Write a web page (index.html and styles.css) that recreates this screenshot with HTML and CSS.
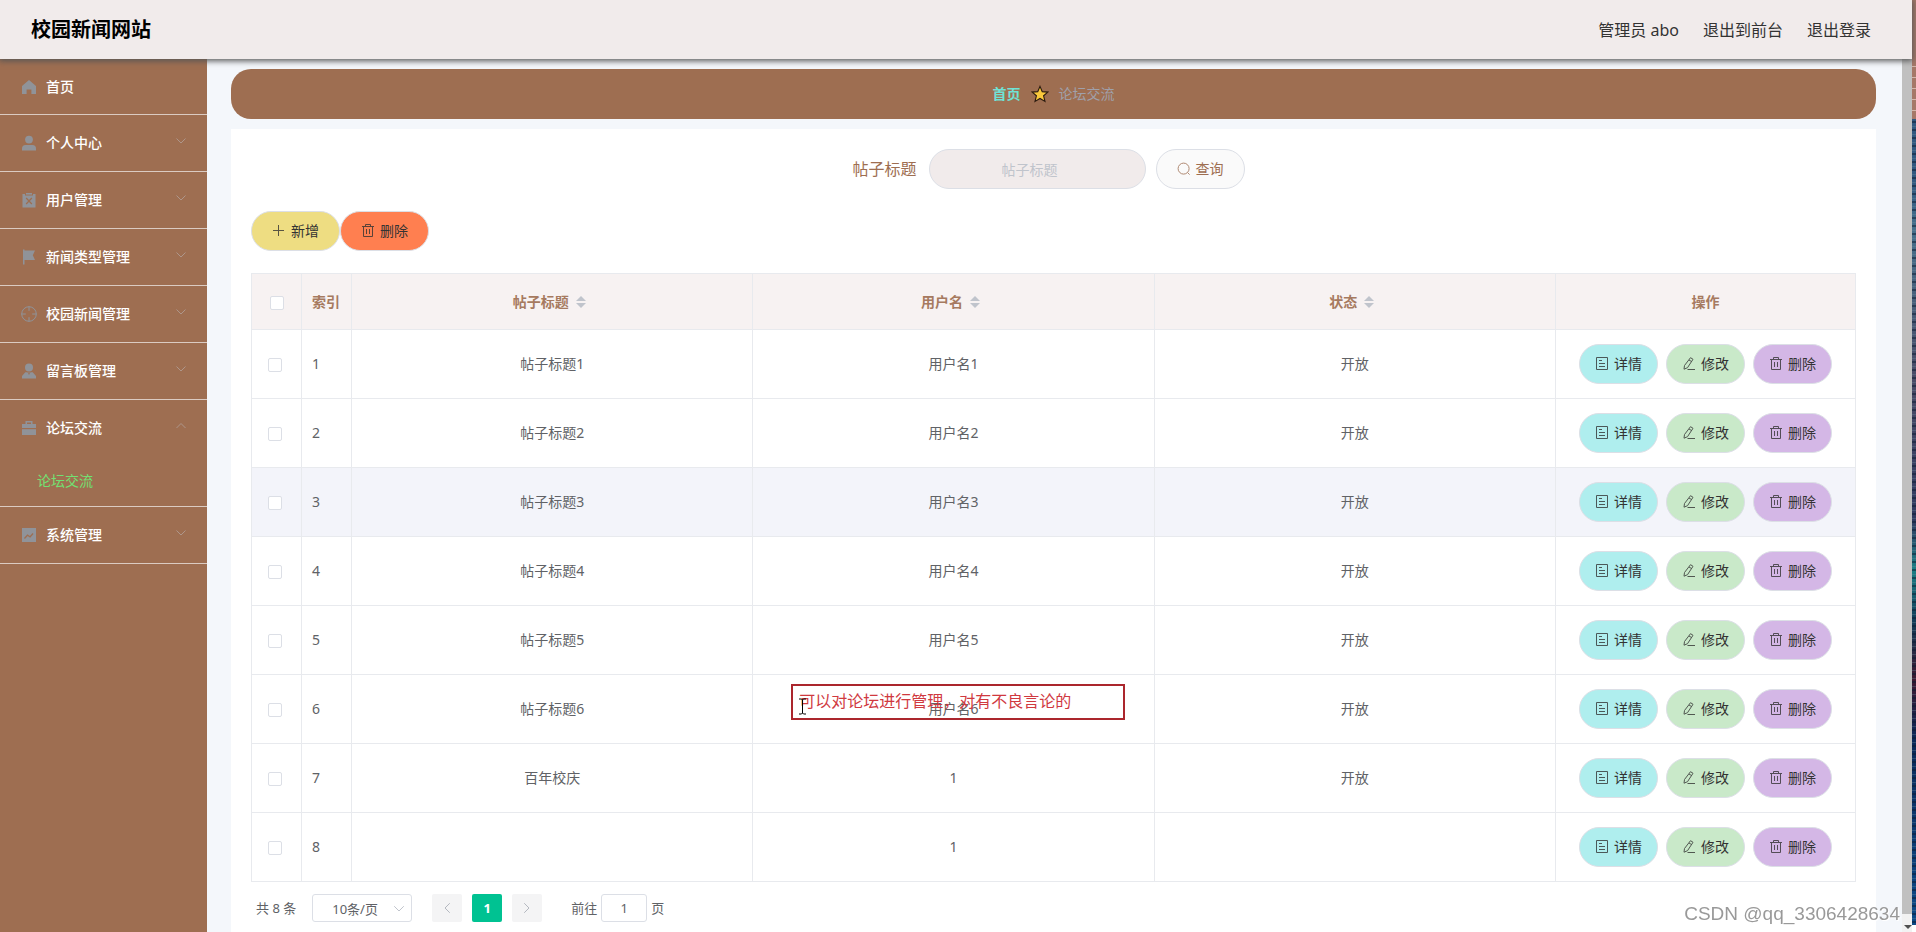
FILE: index.html
```html
<!DOCTYPE html>
<html lang="zh-CN">
<head>
<meta charset="utf-8">
<title>校园新闻网站</title>
<link rel="stylesheet" href="styles.css">
</head>
<body>
<svg class="sprite" aria-hidden="true">
  <symbol id="i-home" viewBox="0 0 16 16"><path d="M8 1 15 7v8h-4.600v-4.600H5.600V15H1V7z"/></symbol>
  <symbol id="i-user" viewBox="0 0 16 16"><circle cx="8" cy="4.600" r="3.900"/><path d="M1 15.500v-2c0-2.200 1.300-3.500 3.500-3.500h7c2.200 0 3.500 1.300 3.500 3.500v2z"/></symbol>
  <symbol id="i-clip" viewBox="0 0 16 16"><path fill-rule="evenodd" d="M1.500 2H4v1.500h8V2h2.500v13.500h-13zM5.600 5.600 4.700 6.500 7.100 9 4.700 11.500l.9.900L8 9.900l2.400 2.500.9-.9L8.900 9l2.400-2.500-.9-.9L8 8.100z"/><path d="M5 1h6v1.600H5z"/></symbol>
  <symbol id="i-flag" viewBox="0 0 16 16"><path d="M2 .5h1.500V15.500H2zM3.500 1.500H14l-2.200 4.700L14 11H3.500z"/></symbol>
  <symbol id="i-aim" viewBox="0 0 16 16"><path class="line" d="M8 .6v4.200M8 11.200v4.200M.6 8h4.200M11.200 8h4.200"/><circle class="line" cx="8" cy="8" r="7.300"/></symbol>
  <symbol id="i-person" viewBox="0 0 16 16"><circle cx="8" cy="4.500" r="4"/><path d="M4.300 9.200h2.200L8 12l1.500-2.800h2.200L15 13v2.500H1V13z"/><path d="m7.300 9.200h1.400L8 11z"/></symbol>
  <symbol id="i-case" viewBox="0 0 16 16"><path fill-rule="evenodd" d="M4.500 1h7v3H15v4H1V4h3.500zM6 2.400V4h4V2.400z"/><path d="M1 9.200h14V15H1z"/></symbol>
  <symbol id="i-chart" viewBox="0 0 16 16"><path fill-rule="evenodd" d="M1 1h14v14H1zM3 11l.9.900 2.800-3 2.500 1.900L12.500 7l-.9-.9-2.700 3-2.500-1.900z"/></symbol>
  <symbol id="i-down" viewBox="0 0 12 12"><path class="line" d="m1.500 3.500 4.500 4.500 4.500-4.500"/></symbol>
  <symbol id="i-up" viewBox="0 0 12 12"><path class="line" d="m1.500 8 4.500-4.500L10.500 8"/></symbol>
  <symbol id="i-left" viewBox="0 0 12 12"><path class="line" d="M8.500 1.500 4 6l4.500 4.500"/></symbol>
  <symbol id="i-right" viewBox="0 0 12 12"><path class="line" d="M3.500 1.500 8 6l-4.500 4.500"/></symbol>
  <symbol id="i-plus" viewBox="0 0 14 14"><path class="line" d="M6.500 1v11M1 6.500h11"/></symbol>
  <symbol id="i-trash" viewBox="0 0 14 14"><path class="line" d="M1 2.500h12M4.500 2.500v-2h5v2M2.500 2.500v10h9v-10M5.500 5v5M8.500 5v5"/></symbol>
  <symbol id="i-doc" viewBox="0 0 14 14"><path class="line" d="M1.500 .5h11v12h-11zM4 3.500h3M4 6.500h6M4 9.500h6"/></symbol>
  <symbol id="i-edit" viewBox="0 0 14 14"><path class="line" d="M8.500 .7 11 2.300 5.500 10.700 2 12.200 2.500 8.500zM7 3 9.800 4.700M5.500 12.500H13"/></symbol>
  <symbol id="i-search" viewBox="0 0 14 14"><circle class="line" cx="6.600" cy="6.600" r="5.500"/><path class="line" d="m10.600 10.600 2 2"/></symbol>
  <symbol id="i-star" viewBox="0 0 16 16"><path d="m8 1.200 2 4.700 5 .4-3.800 3.300L12.400 14.600 8 12l-4.400 2.600 1.200-5L1 6.300l5-.4z"/></symbol>
</svg>

<div class="screen">
  <div class="app">
    <header class="topbar">
      <h1 class="brand">校园新闻网站</h1>
      <nav class="account">
        <span>管理员 abo</span>
        <a href="#">退出到前台</a>
        <a href="#">退出登录</a>
      </nav>
    </header>
    <div class="body">
      <nav class="sidebar">
        <ul class="menu">
          <li class="menu-item"><a class="menu-link" href="#"><svg class="menu-icon"><use href="#i-home"/></svg><span>首页</span></a></li>
          <li class="menu-item"><a class="menu-link" href="#"><svg class="menu-icon"><use href="#i-user"/></svg><span>个人中心</span><svg class="arrow"><use href="#i-down"/></svg></a></li>
          <li class="menu-item"><a class="menu-link" href="#"><svg class="menu-icon"><use href="#i-clip"/></svg><span>用户管理</span><svg class="arrow"><use href="#i-down"/></svg></a></li>
          <li class="menu-item"><a class="menu-link" href="#"><svg class="menu-icon"><use href="#i-flag"/></svg><span>新闻类型管理</span><svg class="arrow"><use href="#i-down"/></svg></a></li>
          <li class="menu-item"><a class="menu-link" href="#"><svg class="menu-icon"><use href="#i-aim"/></svg><span>校园新闻管理</span><svg class="arrow"><use href="#i-down"/></svg></a></li>
          <li class="menu-item"><a class="menu-link" href="#"><svg class="menu-icon"><use href="#i-person"/></svg><span>留言板管理</span><svg class="arrow"><use href="#i-down"/></svg></a></li>
          <li class="menu-item">
            <a class="menu-link" href="#"><svg class="menu-icon"><use href="#i-case"/></svg><span>论坛交流</span><svg class="arrow"><use href="#i-up"/></svg></a>
            <a class="submenu-link" href="#">论坛交流</a>
          </li>
          <li class="menu-item"><a class="menu-link" href="#"><svg class="menu-icon"><use href="#i-chart"/></svg><span>系统管理</span><svg class="arrow"><use href="#i-down"/></svg></a></li>
        </ul>
      </nav>
      <main class="main">
        <nav class="breadcrumb">
          <a class="crumb-home" href="#">首页</a>
          <svg class="star"><use href="#i-star"/></svg>
          <span class="crumb-current">论坛交流</span>
        </nav>
        <section class="card">
          <form class="search">
            <label class="search-label" for="title">帖子标题</label>
            <input class="search-input" id="title" type="text" placeholder="帖子标题">
            <button class="btn btn-search" type="button"><svg class="icon"><use href="#i-search"/></svg>查询</button>
          </form>
          <div class="actions">
            <button class="btn btn-add" type="button"><svg class="icon"><use href="#i-plus"/></svg>新增</button>
            <button class="btn btn-remove" type="button"><svg class="icon"><use href="#i-trash"/></svg>删除</button>
          </div>
          <table class="table">
            <colgroup><col class="col-narrow"><col class="col-narrow"><col><col><col><col class="col-ops"></colgroup>
            <thead>
              <tr>
                <th class="cell-check"><input class="check" type="checkbox" aria-label="全选"></th>
                <th class="cell-index">索引</th>
                <th><span class="sortable">帖子标题<span class="carets"></span></span></th>
                <th><span class="sortable">用户名<span class="carets"></span></span></th>
                <th><span class="sortable">状态<span class="carets"></span></span></th>
                <th>操作</th>
              </tr>
            </thead>
            <tbody id="rows"></tbody>
          </table>
          <div class="pagination">
            <span class="total">共 8 条</span>
            <span class="size">
              <select class="size-select" aria-label="每页条数"><option>10条/页</option></select>
              <svg class="size-arrow"><use href="#i-down"/></svg>
            </span>
            <span class="pager">
              <button class="page-btn" type="button" aria-label="上一页" disabled><svg class="page-icon"><use href="#i-left"/></svg></button>
              <button class="page-btn page-current" type="button">1</button>
              <button class="page-btn" type="button" aria-label="下一页" disabled><svg class="page-icon"><use href="#i-right"/></svg></button>
            </span>
            <label class="jump">前往<input class="jump-input" type="text" value="1">页</label>
          </div>
        </section>
      </main>
      <div class="scrollbar"><div class="thumb"></div><div class="scroll-end"></div></div>
    </div>
  </div>
  <div class="edge"></div>
  <div class="watermark">CSDN @qq_3306428634</div>
</div>
<script src="rows.js"></script>
</body>
</html>
```
FILE: rows.js
```js
const posts = [
  ["帖子标题1", "用户名1", "开放"],
  ["帖子标题2", "用户名2", "开放"],
  ["帖子标题3", "用户名3", "开放"],
  ["帖子标题4", "用户名4", "开放"],
  ["帖子标题5", "用户名5", "开放"],
  ["帖子标题6", "用户名6", "开放"],
  ["百年校庆", "1", "开放"],
  ["", "1", ""]
];
const hovered = 2;
const annotated = 5;

const caption = `<div class="caption">可以对论坛进行管理，对有不良言论的
  <svg class="ibeam" viewBox="0 0 9 17"><path d="M1 1h2.500l1 1 1-1H8M4.500 2v13M1 16h2.500l1-1 1 1H8"/></svg></div>`;

const button = (kind, icon, text) =>
  `<button class="btn btn-row ${kind}" type="button"><svg class="icon"><use href="#${icon}"/></svg>${text}</button>`;

document.getElementById("rows").innerHTML = posts.map(([title, user, state], i) => `
  <tr class="${i === hovered ? "hovered" : ""}">
    <td class="cell-check"><input class="check" type="checkbox" aria-label="选择第${i + 1}行"></td>
    <td class="cell-index">${i + 1}</td>
    <td>${title}</td>
    <td class="cell-user">${user}${i === annotated ? caption : ""}</td>
    <td>${state}</td>
    <td><div class="ops">${button("btn-detail", "i-doc", "详情")}${button("btn-edit", "i-edit", "修改")}${button("btn-delete", "i-trash", "删除")}</div></td>
  </tr>`).join("");
```
FILE: styles.css
```css
* { box-sizing: border-box; }
body {
  margin: 0;
  font: 14px/20px "Noto Sans", "Noto Sans CJK SC", sans-serif;
  color: #606266;
}
a { color: inherit; text-decoration: none; }
button, input, select { font: inherit; color: inherit; }
.sprite { position: absolute; width: 0; height: 0; }
.line { fill: none; stroke: currentColor; stroke-width: 1; }

.screen { display: flex; min-height: 100vh; background: #fff; }
.app { flex: 1; display: flex; flex-direction: column; min-width: 0; }

.topbar {
  position: relative;
  z-index: 1;
  display: flex;
  align-items: center;
  justify-content: space-between;
  height: 59px;
  padding: 0 41px 0 31px;
  background: #f1ebeb;
  box-shadow: 0 1px 6px 1px #555;
}
.brand { margin: 0; font-size: 20px; line-height: 28px; font-weight: 700; color: #000; }
.account { display: flex; gap: 24px; font-size: 16px; line-height: 24px; color: #333; }

.body { flex: 1; display: flex; }

.sidebar { width: 207px; background: #9e6e51; }
.menu { margin: 0; padding: 0; list-style: none; }
.menu-item { border-bottom: 1px solid #dbcbc2; }
.menu-link {
  display: flex;
  align-items: center;
  height: 56px;
  padding: 0 20px 0 21px;
  font-weight: 500;
  color: #fff;
}
.menu-item:first-child .menu-link { height: 55px; }
.menu-icon { width: 16px; height: 16px; margin-right: 9px; fill: #909399; color: #909399; }
.arrow { width: 12px; height: 12px; margin: 0 0 4px auto; color: #ae968a; }
.submenu-link { display: block; padding: 15px 0; padding-left: 37px; color: #72e072; }

.main { flex: 1; display: flex; flex-direction: column; gap: 10px; min-width: 0; padding: 10px 26px 0 24px; background: #f4f7fb; }
.breadcrumb {
  display: flex;
  align-items: center;
  justify-content: center;
  gap: 10px;
  height: 50px;
  border-radius: 20px;
  background: #9e6e51;
}
.crumb-home { font-weight: 700; color: #6fe3d6; }
.crumb-current { color: #a0a0aa; }
.star { width: 18px; height: 18px; fill: #f9c83c; stroke: #2b1a10; stroke-width: 1; }

.card { flex: 1; padding: 20px 20px 0; background: #fff; }
.search { display: flex; align-items: center; justify-content: center; gap: 10px; padding-right: 10px; }
.search-label { padding-right: 2px; font-size: 16px; color: #9e6e51; }
.search-input {
  width: 217px;
  height: 40px;
  padding: 0 30px 0 15px;
  border: 1px solid #dcdfe6;
  border-radius: 20px;
  background: #f1ebeb;
  text-align: center;
}
.search-input::placeholder { color: #c0c4cc; }

.btn {
  display: inline-flex;
  align-items: center;
  justify-content: center;
  gap: 5px;
  width: 89px;
  height: 40px;
  padding: 0;
  border: 1px solid #dcdfe6;
  border-radius: 20px;
  color: #333;
}
.icon { width: 14px; height: 14px; opacity: 0.8; }
.btn-search { background: #fafafa; color: #9e6e51; }
.btn-add { background: #eedd82; }
.btn-remove { background: #ff7f50; }
.btn-row { width: 79px; }
.btn-detail { background: #afeeee; }
.btn-edit { background: #c9e9c9; }
.btn-delete { background: #d4b7e6; }
.actions { display: flex; margin: 22px 0; }

.table {
  width: 100%;
  table-layout: fixed;
  border-collapse: collapse;
  text-align: center;
}
.col-narrow { width: 50px; }
.col-ops { width: 300px; }
.table th, .table td { height: 69px; padding: 0 10px; border: 1px solid #e8eaee; }
.table th { height: 56px; background: #f7f2f2; color: #a67a60; font-weight: 700; }
.table .cell-index { text-align: left; }
.hovered { background: #f3f4fa; }
.check {
  display: inline-block;
  width: 14px;
  height: 14px;
  margin: 0;
  appearance: none;
  border: 1px solid #dcdfe6;
  border-radius: 2px;
  background: #fff;
  vertical-align: middle;
}
.table td.cell-check { padding-right: 13px; }
.sortable { display: inline-flex; align-items: center; gap: 7px; padding-right: 6px; }
.carets::before, .carets::after { content: ""; display: block; border: 5px solid transparent; }
.carets::before { border-top: 0; border-bottom-color: #c0c4cc; margin-bottom: 2px; }
.carets::after { border-bottom: 0; border-top-color: #c0c4cc; }
.ops { display: flex; justify-content: center; gap: 8px; }

.cell-user { position: relative; }
.caption {
  position: absolute;
  left: 38px;
  top: 9px;
  width: 334px;
  padding: 2px 6px 4px;
  border: 2px solid #ab262d;
  font-size: 16px;
  line-height: 26px;
  text-align: left;
  white-space: nowrap;
  color: #d0393f;
}
.ibeam { position: absolute; left: 5px; top: 12px; width: 9px; height: 17px; fill: none; stroke: #000; stroke-width: 1; }

.pagination { display: flex; align-items: center; padding: 12px 5px 10px; font-size: 13px; line-height: 28px; }
.size { position: relative; margin: 0 20px 0 16px; }
.size-select {
  display: block;
  width: 100px;
  height: 28px;
  padding: 0 0 0 19px;
  appearance: none;
  border: 1px solid #dcdfe6;
  border-radius: 3px;
  background: #fff;
}
.size-arrow { position: absolute; right: 7px; top: 9px; width: 12px; height: 12px; color: #c0c4cc; pointer-events: none; }
.pager { display: flex; gap: 10px; margin-right: 29px; }
.page-btn {
  display: flex;
  align-items: center;
  justify-content: center;
  width: 30px;
  height: 28px;
  padding: 0;
  border: 0;
  border-radius: 2px;
  background: #f4f4f5;
  color: #b4b8c0;
}
.page-icon { width: 12px; height: 12px; }
.page-icon, .size-arrow { stroke-linecap: round; }
.page-current { background: #00c292; color: #fff; font-weight: 700; }
.jump { display: flex; gap: 4px; }
.jump-input { width: 46px; height: 28px; padding: 0; border: 1px solid #dcdfe6; border-radius: 3px; text-align: center; }

.scrollbar { display: flex; flex-direction: column; width: 10px; background: #f2f2f2; }
.thumb { flex: 1; background: #c0c0c0; }
.scroll-end { height: 18px; }
.scroll-end::before { content: ""; display: block; margin: 11px 2px 0; border: 4px solid transparent; border-bottom: 0; border-top-color: #505050; }

.edge {
  width: 4px;
  margin-bottom: 7px;
  background:
    repeating-linear-gradient(#0000 0 2px, #0a1a3080 2px 4px, #0000 4px 7px, #7090a050 7px 8px) 0 119px no-repeat,
    repeating-linear-gradient(#0000 0 6px, #f0dcd4a0 6px 7px, #0000 7px 11px) 0 60px / 4px 56px no-repeat,
    linear-gradient(#a67868 0 119px, #315880 119px 180px, #46708c 230px, #4a4a66 380px, #303a60 520px, #1c7f86 570px, #123c58 620px, #3c1830 680px, #0a2858 740px, #0c4a88 100%);
}
.watermark {
  position: fixed;
  right: 16px;
  bottom: 5px;
  z-index: 2;
  font: 19px/26px "Liberation Sans", sans-serif;
  color: #999;
  text-shadow: 1px 1px 0 #fff;
}
```
